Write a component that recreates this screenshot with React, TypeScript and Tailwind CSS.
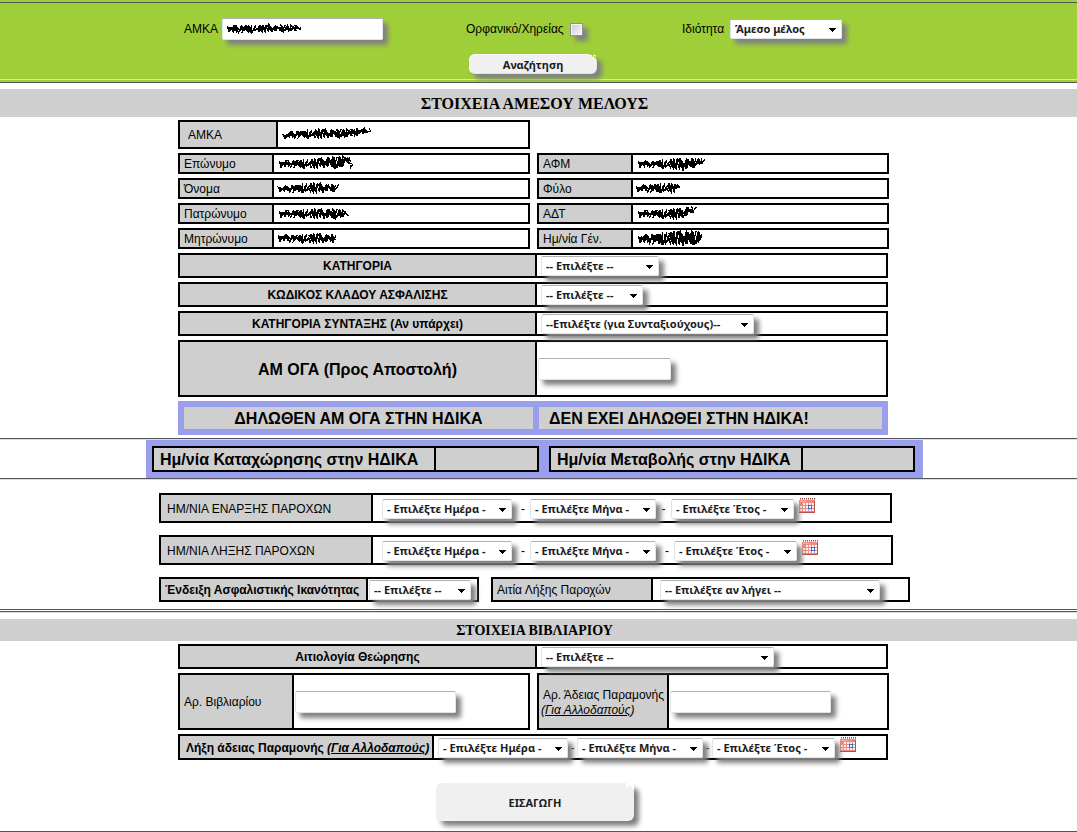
import type { ReactNode } from 'react';
import clsx from 'clsx';

const BOX = 'flex border-2 border-black';
const LABEL = 'flex shrink-0 items-center border-r-2 border-black bg-[#cfcfcf] pt-0.5';
const SHADOW = 'shadow-[5px_5px_5px_#808080]';
const FIELD = 'border border-t-[#b0b0b4] border-[#dfe3ec] bg-white rounded-[2px]';

// [x, top, bottom] outline of a scribble
type Outline = [number, number, number][];

interface ScribbleProps {
  outline: Outline;
  className?: string;
}

function scribblePath(outline: Outline) {
  let seed = 4711;
  const noise = () => {
    seed = (seed * 16807) % 2147483647;
    return seed / 2147483647;
  };
  const points: string[] = [];
  for (let i = 0; i < outline.length - 1; i++) {
    const [x0, t0, b0] = outline[i];
    const [x1, t1, b1] = outline[i + 1];
    for (let x = x0; x < x1; x += 0.5) {
      const k = (x - x0) / (x1 - x0);
      const top = t0 + (t1 - t0) * k;
      const bottom = b0 + (b1 - b0) * k;
      const y = points.length % 2 ? top + noise() * 4 : bottom - noise() * 4;
      points.push(`${(x + noise() * 6 - 3).toFixed(1)} ${y.toFixed(1)}`);
    }
  }
  return `M${points.join('L')}`;
}

function Scribble({ outline, className }: ScribbleProps) {
  return (
    <svg
      width="100"
      height="17"
      viewBox="0 0 100 17"
      className={clsx('shrink-0 overflow-visible', className)}
      shapeRendering="crispEdges"
      aria-hidden="true"
    >
      <path d={scribblePath(outline)} fill="none" stroke="#000" strokeWidth="1.2" />
    </svg>
  );
}

interface SelectProps {
  label: string;
  text: string;
  className: string;
  id?: string;
}

function Select({ label, text, className, id }: SelectProps) {
  return (
    <div className={clsx('relative h-5 shrink-0', className)}>
      <select
        id={id}
        aria-label={id ? undefined : label}
        className={clsx(
          'block h-full w-full appearance-none pl-1 font-["Noto_Sans",sans-serif] text-[11px] leading-4 font-bold text-[#1c1c1c]',
          FIELD,
          SHADOW,
        )}
      >
        <option>{text}</option>
      </select>
      <svg
        width="7"
        height="4"
        viewBox="0 0 7 4"
        className="pointer-events-none absolute top-[9px] right-1.5"
        shapeRendering="crispEdges"
        aria-hidden="true"
      >
        <path d="M0 0h7v1h-1v1h-1v1h-1v1h-1v-1h-1v-1h-1v-1h-1z" fill="#000" />
      </svg>
    </div>
  );
}

function TextInput({ id, className }: { id: string; className: string }) {
  return <input id={id} type="text" className={clsx('h-[22px] shrink-0 px-1', FIELD, SHADOW, className)} />;
}

function CalendarButton() {
  return (
    <button type="button" aria-label="Ημερολόγιο" className="mb-1.5 ml-[5px] shrink-0">
      <svg width="16" height="16" viewBox="0 0 16 16" shapeRendering="crispEdges" aria-hidden="true">
        <path d="M0 1h16v14H0z" fill="#ee8b82" />
        <path d="M0 14h16v1H0zM15 3h1v12h-1z" fill="#b8504a" />
        <path d="M1 0h1v1H1zM3 0h1v1H3zM5 0h1v1H5zM7 0h1v1H7zM9 0h1v1H9zM11 0h1v1h-1zM13 0h1v1h-1zM15 0h1v1h-1z" fill="#8c4a46" />
        <path d="M0 1h1v1H0zM2 1h1v1H2zM4 1h1v1H4zM6 1h1v1H6zM8 1h1v1H8zM10 1h1v1h-1zM12 1h1v1h-1zM14 1h1v1h-1z" fill="#fff" />
        <path d="M1 3h6v1H1z" fill="#f6b3ac" />
        <path
          d="M4 5h2v2H4zM7 5h2v2H7zM10 5h2v2h-2zM13 5h2v2h-2zM1 8h2v2H1zM4 8h2v2H4zM7 8h2v2H7zM13 8h2v2h-2zM1 11h2v2H1zM4 11h2v2H4zM7 11h2v2H7zM10 11h2v2h-2zM13 11h2v2h-2z"
          fill="#fff1ef"
        />
        <path d="M9 7h4v4H9z" fill="#2f6fe0" />
        <path d="M10 8h2v2h-2z" fill="#fff" />
      </svg>
    </button>
  );
}

function DateSelects({ name, separators }: { name: string; separators: [string, string] }) {
  return (
    <>
      <Select label={`${name}, ημέρα`} text="- Επιλέξτε Ημέρα -" className="w-[130px]" />
      <span className={clsx('text-center', separators[0])}>-</span>
      <Select label={`${name}, μήνας`} text="- Επιλέξτε Μήνα -" className="w-[126px]" />
      <span className={clsx('text-center', separators[1])}>-</span>
      <Select label={`${name}, έτος`} text="- Επιλέξτε Έτος -" className="w-[123px]" />
      <CalendarButton />
    </>
  );
}

function Divider() {
  return <hr className="h-0.5 border-t border-b border-t-[#555555] border-b-[#dddddd]" />;
}

function SectionTitle({ children, className }: { children: ReactNode; className: string }) {
  return (
    <h2
      className={clsx(
        'bg-[#cfcfcf] pr-2 text-center font-["Liberation_Serif",serif] font-bold',
        className,
      )}
    >
      {children}
    </h2>
  );
}

interface Person {
  label: string;
  outline: Outline;
}

const people: Person[] = [
  { label: 'Επώνυμο', outline: [[6, 4, 13], [40, 4, 14], [50, 2, 13], [66, 0, 14], [74, 0, 8], [79, 9, 15]] },
  { label: 'ΑΦΜ', outline: [[6, 4, 13], [20, 5, 13], [50, 3, 16], [71, 2, 9]] },
  { label: 'Όνομα', outline: [[5, 5, 12], [30, 3, 14], [50, 3, 13], [63, 4, 11]] },
  { label: 'Φύλο', outline: [[4, 4, 12], [20, 3, 13], [36, 3, 14], [46, 5, 10]] },
  { label: 'Πατρώνυμο', outline: [[6, 4, 13], [40, 4, 14], [60, 3, 14], [73, 4, 12]] },
  { label: 'ΑΔΤ', outline: [[6, 4, 13], [30, 4, 14], [48, 3, 15], [56, 1, 10], [61, 1, 7]] },
  { label: 'Μητρώνυμο', outline: [[5, 3, 12], [22, 4, 13], [45, 3, 14], [62, 4, 12]] },
  { label: 'Ημ/νία Γέν.', outline: [[6, 4, 13], [30, 2, 16], [50, 0, 16], [65, 0, 15], [69, 1, 7]] },
];

const choices = [
  { id: 'category', label: 'ΚΑΤΗΓΟΡΙΑ', text: '-- Επιλέξτε --', width: 'w-[118px]' },
  { id: 'branch', label: 'ΚΩΔΙΚΟΣ ΚΛΑΔΟΥ ΑΣΦΑΛΙΣΗΣ', text: '-- Επιλέξτε --', width: 'w-[102px]' },
  { id: 'pension', label: 'ΚΑΤΗΓΟΡΙΑ ΣΥΝΤΑΞΗΣ (Αν υπάρχει)', text: '--Επιλέξτε (για Συνταξιούχους)--', width: 'w-[213px]' },
];

function ChoiceRow({ id, label, text, width }: { id: string; label: string; text: string; width: string }) {
  return (
    <div className={clsx(BOX, 'h-[25px] w-[710px]')}>
      <label htmlFor={id} className={clsx(LABEL, 'w-[357px] justify-center font-bold')}>
        {label}
      </label>
      <div className="flex items-center pl-1">
        <Select id={id} label={label} text={text} className={width} />
      </div>
    </div>
  );
}

export default function App() {
  return (
    <form
      className='min-h-screen bg-white font-["Liberation_Sans",Arial,sans-serif] text-xs leading-[15px] text-black'
      onSubmit={(e) => e.preventDefault()}
    >
      <header className="bg-[#9fcf38] pt-0.5">
        <div className="h-[77px] border-t border-[#555555] pr-[11px]">
          <div className="mx-auto grid w-[710px] grid-cols-[282px_216px_auto] items-center pt-[15px] pl-1.5">
            <div className="flex items-center gap-1">
              <label htmlFor="search-amka">ΑΜΚΑ</label>
              <div className="relative">
                <TextInput id="search-amka" className="w-[161px]" />
                <Scribble
                  className="pointer-events-none absolute top-0.5 left-0"
                  outline={[[6, 4, 12], [12, 4, 14], [40, 5, 13], [60, 4, 12], [78, 4, 12]]}
                />
              </div>
            </div>
            <div className="flex items-center gap-1.5">
              <label htmlFor="orphan">Ορφανικό/Χηρείας</label>
              <input
                id="orphan"
                type="checkbox"
                className={clsx(
                  'size-[13px] appearance-none border border-[#8e8f8f] bg-linear-to-br from-[#cbcfd5] to-[#f6f6f6] ring-1 ring-[#f4f4f4] ring-inset',
                  SHADOW,
                )}
              />
            </div>
            <div className="flex items-center gap-1.5">
              <label htmlFor="role">Ιδιότητα</label>
              <Select id="role" label="Ιδιότητα" text="Άμεσο μέλος" className="w-[112px]" />
            </div>
          </div>
          <div className="mt-3.5 flex justify-center">
            <button
              type="button"
              className={clsx(
                'relative h-5 w-32 rounded-md border border-t-white border-l-white border-[#e4e4e4] bg-[#f0f0f0] pt-0.5 font-["Noto_Sans",sans-serif] text-[11px] leading-4 font-bold text-[#1c1c1c]',
                SHADOW,
              )}
            >
              Αναζήτηση
              <svg width="8" height="8" viewBox="0 0 8 8" className="absolute -top-px -right-px" aria-hidden="true">
                <path d="M0 1h2l1 2 2-1 3 5V0H0z" fill="#9fcf38" />
                <path d="M1 1l2 1M4 1l3 1M3 3l4 4" stroke="#fff" strokeWidth="1" fill="none" />
              </svg>
            </button>
          </div>
        </div>
        <div className="h-1 border-t border-b border-t-[#dddddd] border-b-[#555555]" />
      </header>

      <SectionTitle className="mt-1.5 pt-[7px] pb-[5px] text-base leading-4">ΣΤΟΙΧΕΙΑ ΑΜΕΣΟΥ ΜΕΛΟΥΣ</SectionTitle>

      <div className="pt-[3px] pr-[11px]">
        <div className="mx-auto flex w-[710px] flex-col gap-1">
          <div className={clsx(BOX, 'h-[29px] w-[352px]')}>
            <div className={clsx(LABEL, 'w-[98px] pl-2')}>ΑΜΚΑ</div>
            <Scribble
              className="self-center"
              outline={[[6, 7, 13], [12, 4, 13], [40, 3, 13], [65, 2, 12], [84, 2, 10], [92, 2, 8]]}
            />
          </div>
          <div className="grid grid-cols-[352px_352px] gap-x-[7px] gap-y-1">
            {people.map((p) => (
              <div key={p.label} className={clsx(BOX, 'h-[21px]')}>
                <div className={clsx(LABEL, 'w-[94px] pl-1')}>{p.label}</div>
                <Scribble outline={p.outline} />
              </div>
            ))}
          </div>
          {choices.map((c) => (
            <ChoiceRow key={c.id} {...c} />
          ))}
          <div className={clsx(BOX, 'h-[57px]')}>
            <label htmlFor="am-oga" className={clsx(LABEL, 'w-[357px] justify-center text-base font-bold')}>
              ΑΜ ΟΓΑ (Προς Αποστολή)
            </label>
            <div className="flex items-center pl-px">
              <TextInput id="am-oga" className="w-[133px]" />
            </div>
          </div>
          <div className="flex gap-1.5 bg-[#999fec] p-1.5 text-base leading-5 font-bold">
            <div className="w-[349px] bg-[#cfcfcf] pt-0.5 text-center">ΔΗΛΩΘΕΝ ΑΜ ΟΓΑ ΣΤΗΝ ΗΔΙΚΑ</div>
            <div className="flex-1 bg-[#cfcfcf] pt-0.5 pl-2.5">ΔΕΝ ΕΧΕΙ ΔΗΛΩΘΕΙ ΣΤΗΝ ΗΔΙΚΑ!</div>
          </div>
        </div>
      </div>

      <div className="pt-[3px]">
        <Divider />
        <div className="pr-2">
          <div className="mx-auto flex w-[777px] gap-2.5 bg-[#999fec] p-1.5 text-base font-bold">
            <div className={clsx(BOX, 'h-[26px] w-[387px] bg-[#cfcfcf]')}>
              <div className={clsx(LABEL, 'w-[282px] pl-1.5')}>Ημ/νία Καταχώρησης στην ΗΔΙΚΑ</div>
            </div>
            <div className={clsx(BOX, 'h-[26px] w-[366px] bg-[#cfcfcf]')}>
              <div className={clsx(LABEL, 'w-[252px] pl-1.5')}>Ημ/νία Μεταβολής στην ΗΔΙΚΑ</div>
            </div>
          </div>
        </div>
        <Divider />
      </div>

      <div className="pt-[13px] pr-2">
        <div className="mx-auto flex w-[751px] flex-col gap-3">
          <div className={clsx(BOX, 'h-[30px] w-[733px]')}>
            <div className={clsx(LABEL, 'w-[212px] pl-1.5')}>ΗΜ/ΝΙΑ ΕΝΑΡΞΗΣ ΠΑΡΟΧΩΝ</div>
            <div className="flex items-center pt-0.5 pl-[9px]">
              <DateSelects name="Έναρξη παροχών" separators={['w-[18px] pl-1', 'w-[15px]']} />
            </div>
          </div>
          <div className={clsx(BOX, 'h-[30px] w-[734px]')}>
            <div className={clsx(LABEL, 'w-[212px] pl-1.5')}>ΗΜ/ΝΙΑ ΛΗΞΗΣ ΠΑΡΟΧΩΝ</div>
            <div className="flex items-center pt-0.5 pl-[9px]">
              <DateSelects name="Λήξη παροχών" separators={['w-[18px] pl-1', 'w-[18px] pl-1']} />
            </div>
          </div>
          <div className="flex gap-3">
            <div className={clsx(BOX, 'h-[25px] w-[320px]')}>
              <label htmlFor="capacity" className={clsx(LABEL, 'w-[207px] pl-1 font-bold')}>
                Ένδειξη Ασφαλιστικής Ικανότητας
              </label>
              <div className="flex items-center pl-px">
                <Select id="capacity" label="Ένδειξη" text="-- Επιλέξτε --" className="w-[102px]" />
              </div>
            </div>
            <div className={clsx(BOX, 'h-[25px] w-[419px]')}>
              <label htmlFor="reason" className={clsx(LABEL, 'w-[160px] pl-1')}>
                Αιτία Λήξης Παροχών
              </label>
              <div className="flex items-center pl-[7px]">
                <Select id="reason" label="Αιτία" text="-- Επιλέξτε αν λήγει --" className="w-[220px]" />
              </div>
            </div>
          </div>
        </div>
      </div>

      <div className="mt-[7px] h-1 border-t border-b border-t-[#555555] border-b-[#dddddd] pt-px">
        <div className="h-px bg-[#555555]" />
      </div>

      <SectionTitle className="mt-1.5 pt-[5px] pb-[3px] text-sm leading-[14px]">ΣΤΟΙΧΕΙΑ ΒΙΒΛΙΑΡΙΟΥ</SectionTitle>

      <div className="pt-[3px] pr-[11px]">
        <div className="mx-auto flex w-[710px] flex-col gap-1">
          <ChoiceRow id="renewal" label="Αιτιολογία Θεώρησης" text="-- Επιλέξτε --" width="w-[233px]" />
          <div className="grid grid-cols-[352px_352px] gap-x-[7px]">
            <div className={clsx(BOX, 'h-[57px]')}>
              <label htmlFor="booklet" className={clsx(LABEL, 'w-[114px] pl-1')}>
                Αρ. Βιβλιαρίου
              </label>
              <div className="flex items-center pl-px">
                <TextInput id="booklet" className="w-[161px]" />
              </div>
            </div>
            <div className={clsx(BOX, 'h-[57px]')}>
              <label htmlFor="permit" className={clsx(LABEL, 'w-[130px] pl-0.5')}>
                <span>
                  <span className="pl-0.5 whitespace-nowrap">Αρ. Άδειας Παραμονής</span>
                  <br />
                  <i>
                    (<u>Για Αλλοδαπούς</u>)
                  </i>
                </span>
              </label>
              <div className="flex items-center pl-px">
                <TextInput id="permit" className="w-[161px]" />
              </div>
            </div>
          </div>
          <div className={clsx(BOX, 'h-[26px]')}>
            <div className={clsx(LABEL, 'w-[254px] pl-1.5 font-bold whitespace-pre')}>
              Λήξη άδειας Παραμονής{' '}
              <i>
                (<u>Για Αλλοδαπούς</u>)
              </i>
            </div>
            <div className="flex items-center pt-0.5 pl-1">
              <DateSelects name="Λήξη άδειας παραμονής" separators={['w-[9px]', 'w-[9px]']} />
            </div>
          </div>
        </div>
      </div>

      <div className="flex justify-center pt-[23px] pr-[7px] pb-2.5">
        <button
          type="submit"
          className={clsx(
            'relative h-[38px] w-[198px] rounded-md bg-[#f0f0f0] font-["Noto_Sans",sans-serif] text-[11px] font-bold text-[#1c1c1c]',
            SHADOW,
          )}
        >
          ΕΙΣΑΓΩΓΗ
          <svg width="8" height="6" viewBox="0 0 8 6" className="absolute top-0 right-0" aria-hidden="true">
            <path d="M0 0h8v6H6V3L4 4 3 2 1 5H0z" fill="#fff" />
          </svg>
        </button>
      </div>
      <Divider />
    </form>
  );
}
